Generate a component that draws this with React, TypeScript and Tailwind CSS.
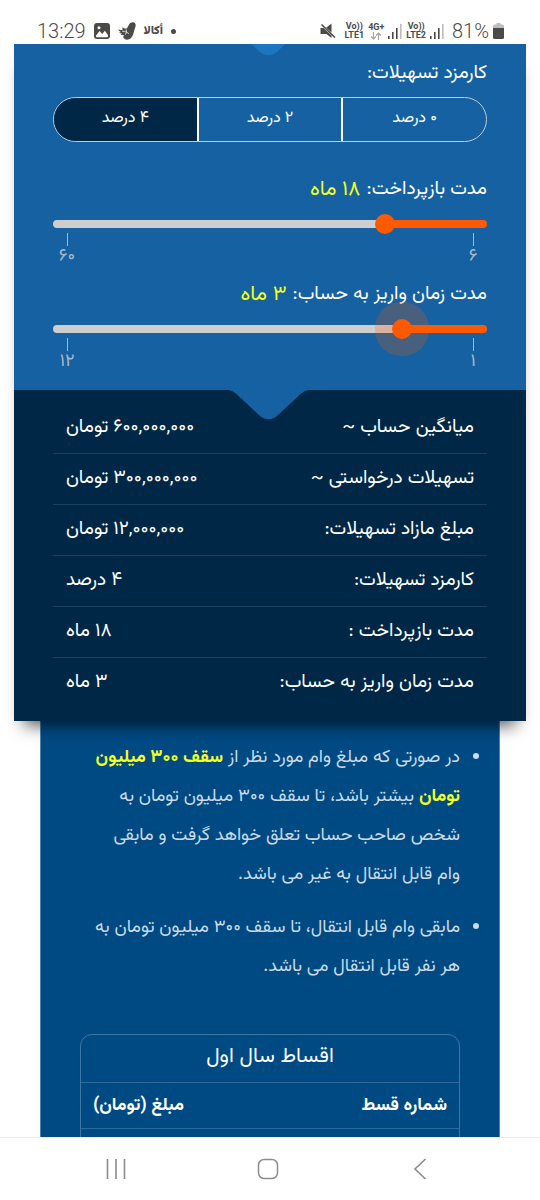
import { useState } from "react";
import { clsx } from "clsx";

const FEE_OPTIONS = [
  { value: 0, label: "۰ درصد" },
  { value: 2, label: "۲ درصد" },
  { value: 4, label: "۴ درصد" },
];

const toFa = (value: number) => value.toLocaleString("en-US").replace(/\d/g, (d) => "۰۱۲۳۴۵۶۷۸۹"[Number(d)]);

interface RangeFieldProps {
  id: string;
  label: string;
  min: number;
  max: number;
  value: number;
  active?: boolean;
  onChange: (value: number) => void;
}

function RangeField({ id, label, min, max, value, active, onChange }: RangeFieldProps) {
  const ratio = (value - min) / (max - min);
  const fill = `calc(10px + (100% - 20px) * ${ratio})`;

  return (
    <div className="flex flex-col">
      <label htmlFor={id} className="flex h-8 items-center gap-1.5 text-[19px] text-white">
        {label}
        <span className="text-[21px]/8 text-[#f4ff1f]">{toFa(value)} ماه</span>
      </label>
      <input
        id={id}
        type="range"
        min={min}
        max={max}
        value={value}
        onChange={(e) => onChange(Number(e.target.value))}
        style={{ backgroundImage: `linear-gradient(to left, #ff5a00 ${fill}, #cecece ${fill})` }}
        className={clsx(
          "mt-[14px] block h-2 w-full cursor-pointer appearance-none rounded-full outline-none [&::-webkit-slider-thumb]:size-5 [&::-webkit-slider-thumb]:appearance-none [&::-webkit-slider-thumb]:rounded-full [&::-webkit-slider-thumb]:bg-[#ff5a00]",
          active && "[&::-webkit-slider-thumb]:shadow-[0_0_0_17px_rgba(255,90,0,0.22)]",
        )}
      />
      <div className="mt-[5px] flex justify-between text-lg leading-[22px] text-[#a9b8c6]">
        {[min, max].map((mark) => (
          <div key={mark} className="flex w-7 flex-col items-center">
            <span className="h-[13px] w-px bg-[#a9b8c6]" />
            {toFa(mark)}
          </div>
        ))}
      </div>
    </div>
  );
}

function SignalBars() {
  return (
    <svg width="14" height="15" viewBox="0 0 14 15" fill="#4a4a4a">
      <rect x="0" y="12" width="1.6" height="3" />
      <rect x="4" y="8" width="1.6" height="7" />
      <rect x="8" y="4" width="1.6" height="11" />
      <rect x="12" y="0" width="1.6" height="15" fill="#bdbdbd" />
    </svg>
  );
}

function StatusBar() {
  return (
    <header
      dir="ltr"
      className="flex h-11 shrink-0 items-end justify-between pr-9 pb-[3px] pl-[37px] font-[Roboto,sans-serif] text-[#4a4a4a]"
    >
      <div className="flex h-5 items-center gap-2">
        <span className="text-[20px] font-light">13:29</span>
        <svg width="16" height="16" viewBox="0 0 16 16">
          <rect width="16" height="16" rx="3" fill="#4a4a4a" />
          <path d="M2 12.5 5.6 8l2.600 3 2.600-3.200L14 12v1.200a1 1 0 0 1-1 1H3a1 1 0 0 1-1-1z" fill="#fff" />
          <circle cx="5" cy="4.8" r="1.5" fill="#fff" />
        </svg>
        <svg width="18" height="18" viewBox="0 0 18 18" fill="#4a4a4a">
          <path d="M11 2.500C12.500 0 16-.300 17.200 1.500c1.200 2-.2 4-.7 6-.8 3.500-1.500 6.500-3.500 8.500-2 2-5.500 2.300-7.300.3-.8-1-.4-2.500.8-3.300-1.500.4-3 .1-4-.6l1.800-.8c-1.200.1-2.400-.2-3.300-.8l1.800-.7C1.800 9.600.7 8.700.2 7.600c1.600.6 3.200.6 4.600.2-.5-.9-.5-1.800-.1-2.600 1 1 2.300 1.600 3.800 1.200C9.800 5.800 10.100 4 11 2.500z" />
          <path d="m4 9.200 4.500.8L8 7.200M8.500 10l2.500 1.800M8.500 10l-1 2.600" stroke="#fff" strokeWidth=".7" fill="none" />
        </svg>
        <span className="font-[Vazirmatn,'DejaVu_Sans',sans-serif] text-xs leading-4 font-black">أكالا</span>
        <span className="size-[5px] rounded-full bg-[#4a4a4a]" />
      </div>
      <div className="flex h-5 items-center gap-1">
        <svg width="16" height="16" viewBox="0 0 16 16" fill="#4a4a4a">
          <path d="M.5 5h3L11.500 12.500V15L6.500 11h-6z M6.200 4.700 11.500.5v9z" />
          <path d="m1.500 1.500 13.500 13" stroke="#4a4a4a" strokeWidth="1.600" />
        </svg>
        <span className="ml-1 text-center text-[9px] leading-[9px] font-bold">Vo))<br />LTE1</span>
        <span className="flex flex-col items-center text-[9px] leading-[9px] font-bold">
          4G+
          <svg width="12" height="8" viewBox="0 0 12 8" fill="none" stroke="#a5a5a5" strokeWidth="1.200">
            <path d="M3.500 0v7M1 4.500 3.500 7 6 4.500M8.500 8V1M6 3.500 8.500 1 11 3.500" />
          </svg>
        </span>
        <SignalBars />
        <span className="text-center text-[9px] leading-[9px] font-bold">Vo))<br />LTE2</span>
        <SignalBars />
        <span className="ml-1 text-[20px] font-light">81%</span>
        <svg width="11" height="16" viewBox="0 0 11 16">
          <path d="M3.500 0h4v1.500H9.500A1.500 1.500 0 0 1 11 3v3H0V3a1.500 1.500 0 0 1 1.500-1.500h2z" fill="#bdbdbd" />
          <path d="M0 5h11v9.500A1.500 1.500 0 0 1 9.500 16h-8A1.500 1.500 0 0 1 0 14.500z" fill="#4a4a4a" />
        </svg>
      </div>
    </header>
  );
}

function Notch({ className }: { className: string }) {
  return (
    <svg
      className={clsx("absolute left-1/2 -translate-x-1/2", className)}
      width="88"
      height="30"
      viewBox="0 0 88 30"
      fill="currentColor"
    >
      <path d="M0 0c5 0 8 1.500 12 5.500L33.500 25.500c5.500 5 12.500 5 18 0L73 5.500C77 1.500 80 0 85 0z" />
    </svg>
  );
}

function NavBar() {
  return (
    <nav
      dir="ltr"
      className="grid h-[63px] shrink-0 grid-cols-3 place-items-center border-t border-[#ececec] bg-white pr-11 pl-10 text-[#8c8c8c]"
    >
      <button type="button" aria-label="Recents">
        <svg width="20" height="22" viewBox="0 0 20 22" stroke="currentColor" strokeWidth="1.600">
          <path d="M1.500 1v20M10 1v20M18.500 1v20" />
        </svg>
      </button>
      <button type="button" aria-label="Home">
        <svg width="22" height="22" viewBox="0 0 22 22" fill="none" stroke="currentColor" strokeWidth="1.500">
          <rect x="1.500" y="1.500" width="19" height="19" rx="5.500" />
        </svg>
      </button>
      <button type="button" aria-label="Back">
        <svg width="14" height="22" viewBox="0 0 14 22" fill="none" stroke="currentColor" strokeWidth="1.600">
          <path d="M12.500 1 2 11l10.500 10" />
        </svg>
      </button>
    </nav>
  );
}

export default function App() {
  const [fee, setFee] = useState(4);
  const [repayment, setRepayment] = useState(18);
  const [deposit, setDeposit] = useState(3);

  const summary = [
    { label: "میانگین حساب ~", value: `${toFa(600000000)} تومان` },
    { label: "تسهیلات درخواستی ~", value: `${toFa(300000000)} تومان` },
    { label: "مبلغ مازاد تسهیلات:", value: `${toFa(12000000)} تومان` },
    { label: "کارمزد تسهیلات:", value: `${toFa(fee)} درصد` },
    { label: "مدت بازپرداخت :", value: `${toFa(repayment)} ماه` },
    { label: "مدت زمان واریز به حساب:", value: `${toFa(deposit)} ماه` },
  ];

  return (
    <div
      dir="rtl"
      className="flex h-screen flex-col overflow-hidden bg-white font-[Vazirmatn,'Noto_Sans_Arabic','DejaVu_Sans',sans-serif]"
    >
      <StatusBar />

      <main className="min-h-0 flex-1 overflow-hidden">
        <section className="relative z-10 mx-[14px] shadow-[0_14px_16px_-10px_rgba(0,0,0,0.7)]">
          <div className="relative bg-[#1561a1] px-[39px] pt-[14px] pb-[17px]">
            <Notch className="-top-[18px] text-[#1c75bf]" />
            <h2 className="h-8 text-[19px] leading-8 text-white">کارمزد تسهیلات:</h2>
            <div className="mt-[7px] flex h-[45px] overflow-hidden rounded-full border border-[#b5d0e6]">
              {FEE_OPTIONS.map((option, index) => (
                <button
                  key={option.value}
                  type="button"
                  aria-pressed={fee === option.value}
                  onClick={() => setFee(option.value)}
                  className={clsx(
                    "flex-1 pb-0.5 text-base text-white",
                    index > 0 && "border-s-2 border-white",
                    fee === option.value && "bg-[#002846]",
                  )}
                >
                  {option.label}
                </button>
              ))}
            </div>
            <div className="mt-8 flex flex-col gap-[11px]">
              <RangeField
                id="repayment"
                label="مدت بازپرداخت:"
                min={6}
                max={60}
                value={repayment}
                onChange={setRepayment}
              />
              <RangeField
                id="deposit"
                label="مدت زمان واریز به حساب:"
                min={1}
                max={12}
                value={deposit}
                active
                onChange={setDeposit}
              />
            </div>
          </div>

          <div className="relative bg-[#002846] px-[39px] pt-[13px] pb-3">
            <Notch className="top-0 text-[#1561a1]" />
            <dl className="divide-y divide-[#1f405a]">
              {summary.map((row) => (
                <div
                  key={row.label}
                  className="flex h-[51px] items-center justify-between px-[13px] text-[19px] text-white"
                >
                  <dt>{row.label}</dt>
                  <dd>{row.value}</dd>
                </div>
              ))}
            </dl>
          </div>
        </section>

        <section className="mx-10 border-x border-[#4c83ad] bg-[#004a84] px-[39px] pt-[18px]">
          <ul className="list-outside list-disc space-y-[14px] pe-2 text-lg leading-[39px] text-[#ccdae6]">
            <li>
              در صورتی که مبلغ وام مورد نظر از <strong className="text-[#f4ff1f]">سقف ۳۰۰ میلیون تومان</strong> بیشتر
              باشد، تا سقف ۳۰۰ میلیون تومان به شخص صاحب حساب تعلق خواهد گرفت و مابقی وام قابل انتقال به غیر می باشد.
            </li>
            <li>مابقی وام قابل انتقال، تا سقف ۳۰۰ میلیون تومان به هر نفر قابل انتقال می باشد.</li>
          </ul>

          <div className="mt-[47px] rounded-t-xl border border-[#3d76a3]">
            <table className="w-full text-white">
              <caption className="h-[47px] text-[21px] leading-[44px]">اقساط سال اول</caption>
              <thead>
                <tr className="h-[46px] border-y border-[#2d6a9a] text-lg">
                  <th scope="col" className="px-3 text-start font-bold">
                    شماره قسط
                  </th>
                  <th scope="col" className="px-3 text-end font-bold">
                    مبلغ (تومان)
                  </th>
                </tr>
              </thead>
              <tbody>
                <tr className="h-12">
                  <td />
                  <td />
                </tr>
              </tbody>
            </table>
          </div>
        </section>
      </main>

      <NavBar />
    </div>
  );
}
